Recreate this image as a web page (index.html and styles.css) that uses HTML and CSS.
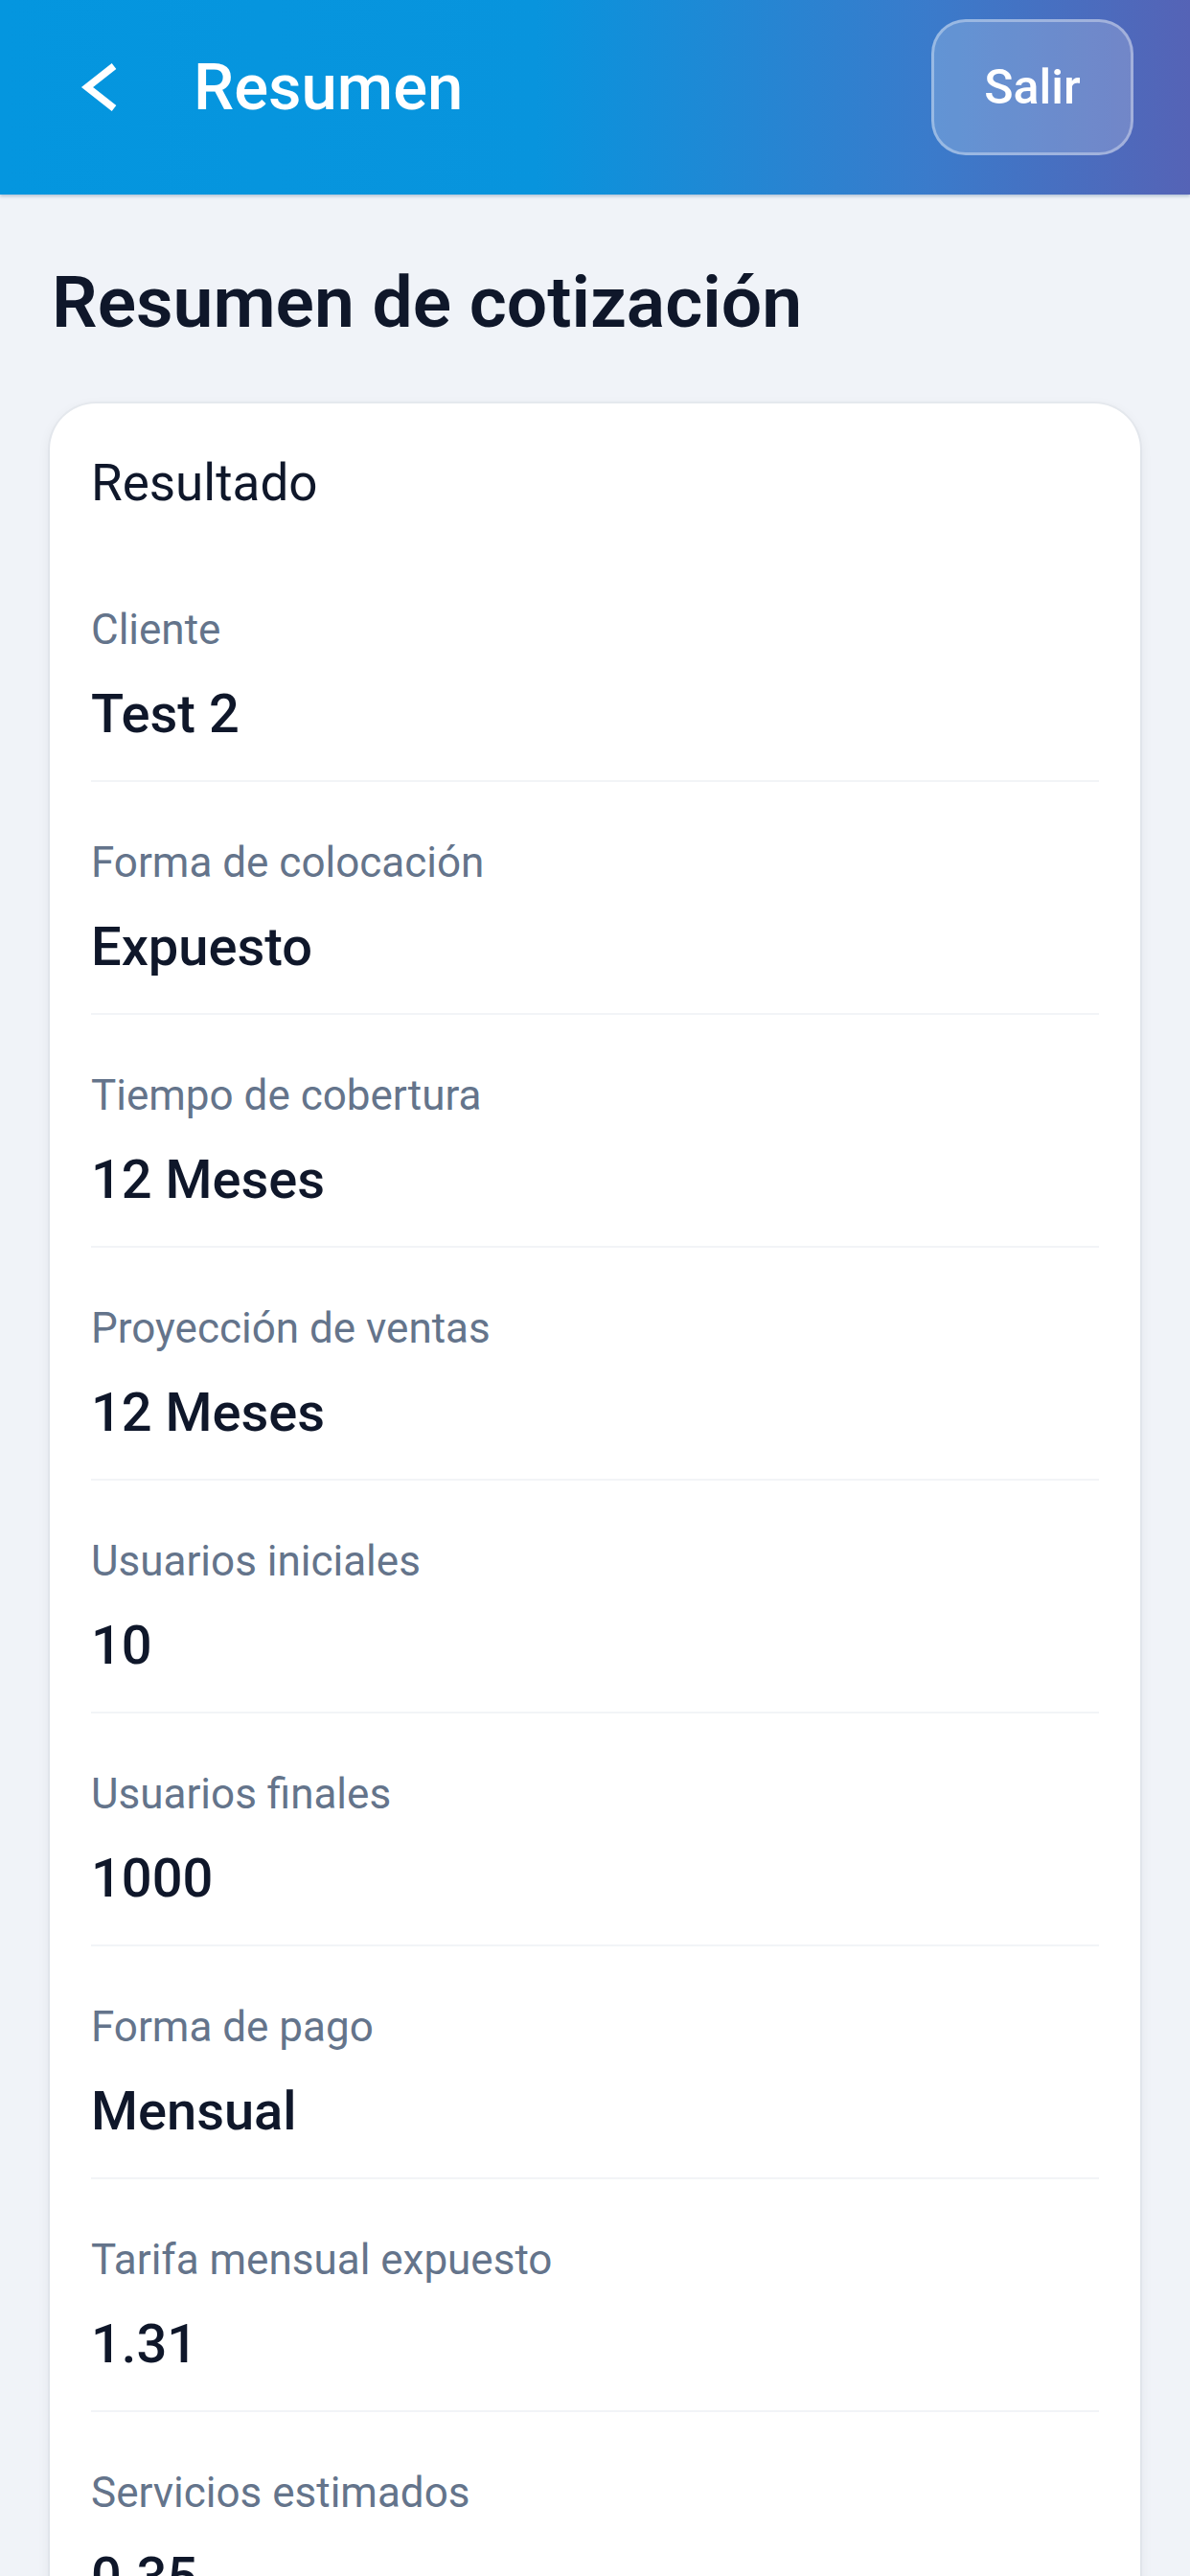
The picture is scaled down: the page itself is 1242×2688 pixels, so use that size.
FILE: index.html
```html
<!DOCTYPE html>
<html lang="es">
<head>
    <meta charset="UTF-8">
    <meta name="viewport" content="width=device-width, initial-scale=1.0">
    <title>Resumen de cotización</title>
    <link rel="stylesheet" href="styles.css">
</head>
<body>
    <header class="topbar">
        <button class="back-btn" aria-label="Volver">
            <svg width="40" height="50" viewBox="0 0 40 50">
                <polyline points="35,3 7,25 35,47" fill="none" stroke="#fff" stroke-width="7.5" stroke-linejoin="miter"/>
            </svg>
        </button>
        <div class="topbar-title">Resumen</div>
        <button class="exit-btn">Salir</button>
    </header>

    <main class="content">
        <h1 class="page-title">Resumen de cotización</h1>

        <section class="summary-card">
            <div class="card-heading">Resultado</div>

            <div class="summary-row">
                <div class="row-label">Cliente</div>
                <div class="row-value">Test 2</div>
            </div>
            <div class="summary-row">
                <div class="row-label">Forma de colocación</div>
                <div class="row-value">Expuesto</div>
            </div>
            <div class="summary-row">
                <div class="row-label">Tiempo de cobertura</div>
                <div class="row-value">12 Meses</div>
            </div>
            <div class="summary-row">
                <div class="row-label">Proyección de ventas</div>
                <div class="row-value">12 Meses</div>
            </div>
            <div class="summary-row">
                <div class="row-label">Usuarios iniciales</div>
                <div class="row-value">10</div>
            </div>
            <div class="summary-row">
                <div class="row-label">Usuarios finales</div>
                <div class="row-value">1000</div>
            </div>
            <div class="summary-row">
                <div class="row-label">Forma de pago</div>
                <div class="row-value">Mensual</div>
            </div>
            <div class="summary-row">
                <div class="row-label">Tarifa mensual expuesto</div>
                <div class="row-value">1.31</div>
            </div>
            <div class="summary-row">
                <div class="row-label">Servicios estimados</div>
                <div class="row-value">0.35</div>
            </div>
        </section>
    </main>
</body>
</html>
```

FILE: styles.css
```css
* {
    margin: 0;
    padding: 0;
    box-sizing: border-box;
}

body {
    font-family: Roboto, 'Noto Sans', 'Liberation Sans', sans-serif;
    background: #f0f3f8;
    color: #0f172a;
    width: 1242px;
}

/* top bar */
.topbar {
    display: flex;
    align-items: center;
    height: 203px;
    padding: 20px 59px 41px 84px;
    background: linear-gradient(90deg, #0496df 0%, #0894dd 45%, #3a7bcb 78%, #5563b6 100%);
    box-shadow: 0 2px 3px rgba(10, 60, 120, 0.25);
    color: white;
}

.back-btn {
    background: none;
    border: none;
    width: 40px;
    height: 50px;
    display: flex;
    align-items: center;
    cursor: pointer;
}

.topbar-title {
    margin-left: 78px;
    font-size: 67px;
    font-weight: 500;
    line-height: 80px;
    flex: 1;
}

.exit-btn {
    width: 211px;
    height: 142px;
    border-radius: 36px;
    background: rgba(255, 255, 255, 0.2);
    border: 3px solid rgba(255, 255, 255, 0.35);
    color: white;
    font-family: inherit;
    font-size: 50px;
    font-weight: 500;
    cursor: pointer;
}

/* content */
.content {
    padding: 68px 52px 0;
}

.page-title {
    font-size: 75px;
    font-weight: 600;
    line-height: 88px;
    color: #0f172a;
    padding-left: 2px;
    margin-bottom: 62px;
}

.summary-card {
    background: white;
    border-radius: 48px;
    padding: 51px 43px 0;
    box-shadow: 0 0 0 2px rgba(15, 23, 42, 0.03), 0 4px 14px rgba(15, 23, 42, 0.07);
}

.card-heading {
    font-size: 53px;
    line-height: 64px;
    font-weight: 400;
    color: #0f172a;
    margin-bottom: 37px;
}

.summary-row {
    padding: 56px 0 34px;
    border-bottom: 2px solid #f2f4f7;
}

.row-label {
    font-size: 44px;
    line-height: 56px;
    color: #64748b;
    margin-bottom: 25px;
}

.row-value {
    font-size: 56px;
    line-height: 70px;
    font-weight: 500;
    color: #0f172a;
}
```
